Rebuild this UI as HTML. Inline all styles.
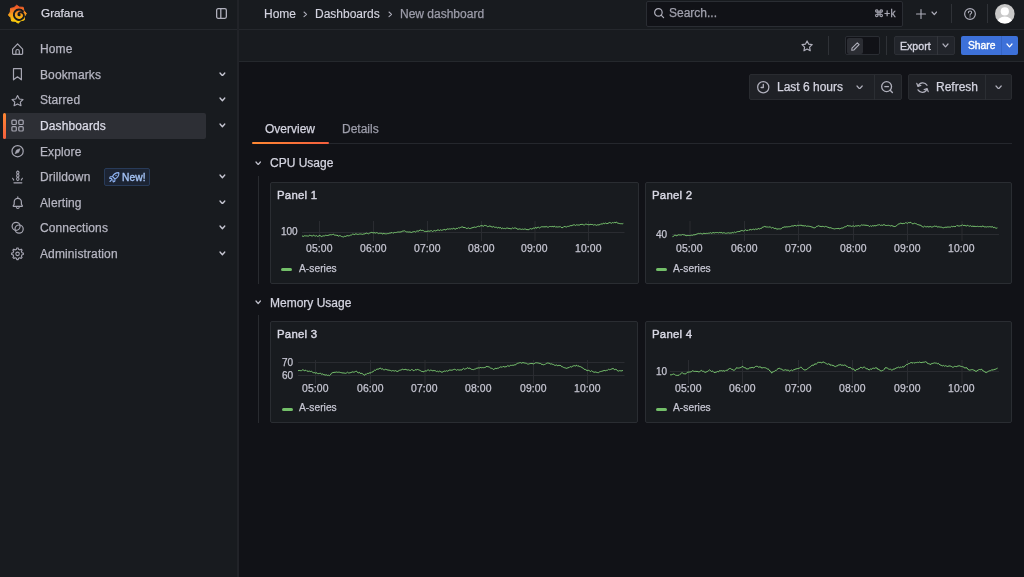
<!DOCTYPE html>
<html><head><meta charset="utf-8"><style>
html,body{margin:0;padding:0;}
body{width:1024px;height:577px;overflow:hidden;background:#111217;position:relative;font-family:"Liberation Sans",sans-serif;}
.t{position:absolute;white-space:nowrap;line-height:1;will-change:transform;-webkit-text-stroke:0.25px currentColor;}
</style></head><body>
<div style="position:absolute;left:0;top:0;width:1024px;height:29px;background:#181b1f"></div><div style="position:absolute;left:0;top:29px;width:1024px;height:1px;background:#25282d"></div><div style="position:absolute;left:0;top:30px;width:237px;height:547px;background:#181b1f"></div><div style="position:absolute;left:237px;top:0;width:2px;height:577px;background:#212328"></div><div style="position:absolute;left:239px;top:30px;width:785px;height:31px;background:#181b1f"></div><div style="position:absolute;left:239px;top:61px;width:785px;height:1px;background:#25282d"></div><svg style="position:absolute;left:7.6px;top:3.6px;overflow:visible" width="19" height="20" viewBox="0 0 19 20"><defs><linearGradient id="lg" x1="0" y1="1" x2="0" y2="0"><stop offset="0.1" stop-color="#FBCA0A"/><stop offset="0.45" stop-color="#F7A21B"/><stop offset="0.9" stop-color="#F05A28"/></linearGradient></defs>
<polygon fill="url(#lg)" stroke="url(#lg)" stroke-width="1" stroke-linejoin="round" points="8.62,1.23 11.63,3.14 15.19,3.31 15.96,6.78 18.37,9.42 16.46,12.43 16.29,15.99 12.82,16.76 10.18,19.17 7.17,17.26 3.61,17.09 2.84,13.62 0.43,10.98 2.34,7.97 2.51,4.41 5.98,3.64"/>
<path d="M14.9 7.2 A5.2 5.2 0 1 0 15.9 12.6 C16.2 10.2 14.8 8.2 12.6 8.3 C10.9 8.4 10.1 9.8 10.5 11" fill="none" stroke="#181b1f" stroke-width="1.95" stroke-linecap="round"/><circle cx="11.4" cy="11" r="1.2" fill="#181b1f"/></svg><div class="t" style="left:40.5px;top:7.2px;font-size:11.75px;color:#d8d8e4;font-weight:400;-webkit-text-stroke:0.25px #d8d8e4;">Grafana</div><svg style="position:absolute;left:216px;top:8px;overflow:visible" width="11" height="11" viewBox="0 0 11 11"><rect x="0.65" y="0.65" width="9.7" height="9.7" rx="1.5" fill="none" stroke="#b0b0bc" stroke-width="1.3"/><line x1="4.8" y1="0.8" x2="4.8" y2="10.2" stroke="#b0b0bc" stroke-width="1.3"/></svg><div style="position:absolute;left:3px;top:113px;width:203px;height:25.5px;background:#2d2f35;border-radius:2px"></div><div style="position:absolute;left:3px;top:113px;width:3px;height:25.5px;border-radius:1.5px;background:linear-gradient(180deg,#FF8833,#F55F3E)"></div><svg style="position:absolute;left:0;top:0" width="237" height="300"><path d="M12.6 49.2 L17.6 43.8 L22.6 49.2 V53.6 a0.8 0.8 0 0 1 -0.8 0.8 H13.4 a0.8 0.8 0 0 1 -0.8 -0.8 Z" fill="none" stroke="#a6a6b2" stroke-width="1.2" stroke-linejoin="round"/><path d="M15.9 54.3 V51.2 a1.7 1.7 0 0 1 3.4 0 V54.3" fill="none" stroke="#a6a6b2" stroke-width="1.2"/><path d="M13.5 68.7 H21.4 V79.8 L17.45 76.8 L13.5 79.8 Z" fill="none" stroke="#a6a6b2" stroke-width="1.2" stroke-linejoin="round"/><path d="M17.55 95.5 L19.3 99 L23 99.5 L20.3 102.1 L21 105.7 L17.55 103.9 L14.1 105.7 L14.8 102.1 L12.1 99.5 L15.8 99 Z" fill="none" stroke="#a6a6b2" stroke-width="1.15" stroke-linejoin="round"/><rect x="11.9" y="120.1" width="4.4" height="4.4" rx="1" fill="none" stroke="#a6a6b2" stroke-width="1.2"/><rect x="18.8" y="120.1" width="4.4" height="4.4" rx="1" fill="none" stroke="#a6a6b2" stroke-width="1.2"/><rect x="11.9" y="126.6" width="4.4" height="4.4" rx="1" fill="none" stroke="#a6a6b2" stroke-width="1.2"/><rect x="18.8" y="126.6" width="4.4" height="4.4" rx="1" fill="none" stroke="#a6a6b2" stroke-width="1.2"/><circle cx="17.6" cy="151.2" r="5.6" fill="none" stroke="#a6a6b2" stroke-width="1.2"/><path d="M20.1 148.7 L18.7 152.3 L15.1 153.7 L16.5 150.1 Z" fill="#a6a6b2" stroke="#a6a6b2" stroke-width="0.6" stroke-linejoin="round"/><path d="M17.8 170.9 C19.4 171.6 19.4 173.4 17.8 174.1 C16.2 173.4 16.2 171.6 17.8 170.9 Z M17.8 174.1 C19.4 174.8 19.4 176.6 17.8 177.3 C16.2 176.6 16.2 174.8 17.8 174.1 Z M17.8 177.3 C19.4 178 19.4 179.8 17.8 180.6 C16.2 179.8 16.2 178 17.8 177.3 Z" fill="none" stroke="#a6a6b2" stroke-width="1.05"/><path d="M12.6 178.2 L13.8 180.1 M22.4 178.2 L21.2 180.1" stroke="#a6a6b2" stroke-width="1.05" stroke-linecap="round"/><path d="M14 182.8 H21.8" stroke="#a6a6b2" stroke-width="1.3" stroke-linecap="round"/><path d="M14.2 204.2 V202 A3.6 3.6 0 0 1 21.4 202 V204.2 L22.3 205.6 V206.3 H13.3 V205.6 Z" fill="none" stroke="#a6a6b2" stroke-width="1.2" stroke-linejoin="round"/><path d="M16.4 207.7 Q17.8 209.2 19.2 207.7" fill="none" stroke="#a6a6b2" stroke-width="1.1" stroke-linecap="round"/><path d="M17.8 196.8 V198.3" stroke="#a6a6b2" stroke-width="1.1" stroke-linecap="round"/><circle cx="16.1" cy="226.3" r="4.0" fill="none" stroke="#a6a6b2" stroke-width="1.2"/><circle cx="19.1" cy="229.1" r="4.1" fill="none" stroke="#a6a6b2" stroke-width="1.2"/><polygon points="16.51,249.31 16.80,247.94 18.20,247.94 18.49,249.31 19.98,249.93 21.15,249.16 22.14,250.15 21.37,251.32 21.99,252.81 23.36,253.10 23.36,254.50 21.99,254.79 21.37,256.28 22.14,257.45 21.15,258.44 19.98,257.67 18.49,258.29 18.20,259.66 16.80,259.66 16.51,258.29 15.02,257.67 13.85,258.44 12.86,257.45 13.63,256.28 13.01,254.79 11.64,254.50 11.64,253.10 13.01,252.81 13.63,251.32 12.86,250.15 13.85,249.16 15.02,249.93" fill="none" stroke="#a6a6b2" stroke-width="1.1" stroke-linejoin="round"/><circle cx="17.55" cy="253.85" r="1.75" fill="none" stroke="#a6a6b2" stroke-width="1.1"/></svg><div class="t" style="left:40.3px;top:43.2px;font-size:12px;color:#b6b6c2;font-weight:400;letter-spacing:0.12px;">Home</div><div class="t" style="left:40.3px;top:68.8px;font-size:12px;color:#b6b6c2;font-weight:400;letter-spacing:0.12px;">Bookmarks</div><svg style="position:absolute;left:218.8px;top:71.69999999999999px" width="6.8" height="4.8" viewBox="-1 -1 6.8 4.8"><path d="M0 0 L2.4 2.8 L4.8 0" fill="none" stroke="#c8c8d4" stroke-width="1.3" stroke-linecap="round" stroke-linejoin="round"/></svg><div class="t" style="left:40.3px;top:94.4px;font-size:12px;color:#b6b6c2;font-weight:400;letter-spacing:0.12px;">Starred</div><svg style="position:absolute;left:218.8px;top:97.3px" width="6.8" height="4.8" viewBox="-1 -1 6.8 4.8"><path d="M0 0 L2.4 2.8 L4.8 0" fill="none" stroke="#c8c8d4" stroke-width="1.3" stroke-linecap="round" stroke-linejoin="round"/></svg><div class="t" style="left:40.3px;top:120.00000000000001px;font-size:12px;color:#dcdce8;font-weight:400;letter-spacing:0.12px;">Dashboards</div><svg style="position:absolute;left:218.8px;top:122.9px" width="6.8" height="4.8" viewBox="-1 -1 6.8 4.8"><path d="M0 0 L2.4 2.8 L4.8 0" fill="none" stroke="#c8c8d4" stroke-width="1.3" stroke-linecap="round" stroke-linejoin="round"/></svg><div class="t" style="left:40.3px;top:145.6px;font-size:12px;color:#b6b6c2;font-weight:400;letter-spacing:0.12px;">Explore</div><div class="t" style="left:40.3px;top:171.2px;font-size:12px;color:#b6b6c2;font-weight:400;letter-spacing:0.12px;">Drilldown</div><svg style="position:absolute;left:218.8px;top:174.1px" width="6.8" height="4.8" viewBox="-1 -1 6.8 4.8"><path d="M0 0 L2.4 2.8 L4.8 0" fill="none" stroke="#c8c8d4" stroke-width="1.3" stroke-linecap="round" stroke-linejoin="round"/></svg><div class="t" style="left:40.3px;top:196.8px;font-size:12px;color:#b6b6c2;font-weight:400;letter-spacing:0.12px;">Alerting</div><svg style="position:absolute;left:218.8px;top:199.70000000000002px" width="6.8" height="4.8" viewBox="-1 -1 6.8 4.8"><path d="M0 0 L2.4 2.8 L4.8 0" fill="none" stroke="#c8c8d4" stroke-width="1.3" stroke-linecap="round" stroke-linejoin="round"/></svg><div class="t" style="left:40.3px;top:222.4px;font-size:12px;color:#b6b6c2;font-weight:400;letter-spacing:0.12px;">Connections</div><svg style="position:absolute;left:218.8px;top:225.3px" width="6.8" height="4.8" viewBox="-1 -1 6.8 4.8"><path d="M0 0 L2.4 2.8 L4.8 0" fill="none" stroke="#c8c8d4" stroke-width="1.3" stroke-linecap="round" stroke-linejoin="round"/></svg><div class="t" style="left:40.3px;top:248.0px;font-size:12px;color:#b6b6c2;font-weight:400;letter-spacing:0.12px;">Administration</div><svg style="position:absolute;left:218.8px;top:250.9px" width="6.8" height="4.8" viewBox="-1 -1 6.8 4.8"><path d="M0 0 L2.4 2.8 L4.8 0" fill="none" stroke="#c8c8d4" stroke-width="1.3" stroke-linecap="round" stroke-linejoin="round"/></svg><div style="position:absolute;left:104px;top:168px;width:45.5px;height:17.5px;box-sizing:border-box;border:1px solid #283b59;background:#1c2433;border-radius:2px"></div><svg style="position:absolute;left:108.5px;top:171.5px;overflow:visible" width="10.5" height="10.5" viewBox="0 0 10.5 10.5"><path d="M9.6 0.6 C7 0.6 4.8 2 3.5 4.5 L6 7 C8.5 5.7 9.9 3.5 9.9 0.9 Z M3.5 4.5 L1.3 4.7 L0.6 6.3 L2.7 6.6 M6 7 L5.8 9.2 L4.2 9.9 L3.9 7.8 M2.8 7.7 L1 9.5" fill="none" stroke="#8fb3f2" stroke-width="1.1" stroke-linejoin="round" stroke-linecap="round"/><circle cx="7" cy="3.5" r="0.7" fill="#8fb3f2"/></svg><div class="t" style="left:122.3px;top:173.3px;font-size:10.2px;color:#a4c2f4;font-weight:400;-webkit-text-stroke:0.35px #a4c2f4;letter-spacing:0.1px;">New!</div><div class="t" style="left:264px;top:7.5px;font-size:12px;color:#d4d4e0;font-weight:400;-webkit-text-stroke:0.15px #d4d4e0;">Home</div><svg style="position:absolute;left:303.2px;top:11px" width="4.6" height="6.6" viewBox="-1 -1 4.6 6.6"><path d="M0 0 L2.6 2.3 L0 4.6" fill="none" stroke="#b0b0bc" stroke-width="1.05" stroke-linecap="round" stroke-linejoin="round"/></svg><div class="t" style="left:315px;top:7.5px;font-size:12px;color:#d4d4e0;font-weight:400;-webkit-text-stroke:0.15px #d4d4e0;">Dashboards</div><svg style="position:absolute;left:387.6px;top:11px" width="4.6" height="6.6" viewBox="-1 -1 4.6 6.6"><path d="M0 0 L2.6 2.3 L0 4.6" fill="none" stroke="#b0b0bc" stroke-width="1.05" stroke-linecap="round" stroke-linejoin="round"/></svg><div class="t" style="left:400px;top:7.5px;font-size:12px;color:#9d9daa;font-weight:400;">New dashboard</div><div style="position:absolute;left:646px;top:1px;width:257px;height:26px;box-sizing:border-box;border:1px solid #2a2d33;background:#111217;border-radius:2px"></div><svg style="position:absolute;left:654px;top:8.3px;overflow:visible" width="10.5" height="10.5" viewBox="0 0 10.5 10.5"><circle cx="4.4" cy="4.4" r="3.75" fill="none" stroke="#b0b0bc" stroke-width="1.2"/><path d="M7.1 7.1 L9.6 9.6" stroke="#b0b0bc" stroke-width="1.2" stroke-linecap="round"/></svg><div class="t" style="left:669.2px;top:7.3px;font-size:12px;color:#a0a0ac;font-weight:400;">Search...</div><div class="t" style="left:874.4px;top:8.8px;font-size:10px;color:#a8a8b4;font-weight:400;letter-spacing:0.3px;-webkit-text-stroke:0.3px #a8a8b4;">&#8984;+k</div><svg style="position:absolute;left:916px;top:8.7px;overflow:visible" width="10" height="10" viewBox="0 0 10 10"><path d="M5 0.5 V9.5 M0.5 5 H9.5" stroke="#b0b0bc" stroke-width="1.1" stroke-linecap="round"/></svg><svg style="position:absolute;left:930.8px;top:11.2px" width="6.6" height="4.6" viewBox="-1 -1 6.6 4.6"><path d="M0 0 L2.3 2.6 L4.6 0" fill="none" stroke="#b0b0bc" stroke-width="1.15" stroke-linecap="round" stroke-linejoin="round"/></svg><div style="position:absolute;left:951px;top:4px;width:1px;height:19px;background:#2f3237"></div><svg style="position:absolute;left:963.6px;top:7.6px;overflow:visible" width="12" height="12" viewBox="0 0 12 12"><circle cx="6" cy="6" r="5.35" fill="none" stroke="#b0b0bc" stroke-width="1.15"/><path d="M4.4 4.7 C4.4 3.6 5.1 3 6 3 C6.9 3 7.7 3.6 7.7 4.5 C7.7 5.5 6.05 5.7 6.05 6.9 V7.3" fill="none" stroke="#b0b0bc" stroke-width="1.05" stroke-linecap="round"/><circle cx="6.05" cy="8.9" r="0.65" fill="#b0b0bc"/></svg><div style="position:absolute;left:987px;top:4px;width:1px;height:19px;background:#2f3237"></div><svg style="position:absolute;left:995px;top:3.8px;overflow:visible" width="19.6" height="19.6" viewBox="0 0 19.6 19.6"><defs><clipPath id="av"><circle cx="9.8" cy="9.8" r="9.8"/></clipPath></defs><circle cx="9.8" cy="9.8" r="9.8" fill="#c8c8c8"/><g clip-path="url(#av)" fill="#ffffff"><circle cx="9.8" cy="7.4" r="4.1"/><ellipse cx="9.8" cy="19.2" rx="7.8" ry="6.8"/></g></svg><svg style="position:absolute;left:801px;top:39.8px;overflow:visible" width="12.2" height="11.8" viewBox="0 0 12.2 11.8"><path d="M6.1 0.9 L7.65 4.1 L11.2 4.6 L8.6 7.05 L9.25 10.8 L6.1 9.05 L2.95 10.8 L3.6 7.05 L1 4.6 L4.55 4.1 Z" fill="none" stroke="#b0b0bc" stroke-width="1.15" stroke-linejoin="round"/></svg><div style="position:absolute;left:828px;top:36px;width:1px;height:19px;background:#2f3237"></div><div style="position:absolute;left:845px;top:36px;width:35px;height:19px;box-sizing:border-box;border:1px solid #2a2d33;background:#111217;border-radius:2px"></div><div style="position:absolute;left:847px;top:38px;width:16px;height:15.5px;background:#2b2d33;border-radius:2px"></div><svg style="position:absolute;left:850.5px;top:41.5px;overflow:visible" width="9" height="9" viewBox="0 0 9 9"><path d="M6.3 0.9 L8.1 2.7 L2.8 8 L0.8 8.3 L1 6.2 Z" fill="none" stroke="#b0b0bc" stroke-width="1.1" stroke-linejoin="round"/></svg><div style="position:absolute;left:886px;top:36px;width:1px;height:19px;background:#2f3237"></div><div style="position:absolute;left:893.5px;top:36px;width:61px;height:19px;box-sizing:border-box;border:1px solid #2c2f35;background:#22252b;border-radius:2px"></div><div style="position:absolute;left:937px;top:36px;width:1px;height:19px;background:#33363c"></div><div class="t" style="left:899.8px;top:40.5px;font-size:10.6px;color:#d6d6e2;font-weight:400;-webkit-text-stroke:0.35px #d6d6e2;">Export</div><svg style="position:absolute;left:942.3px;top:43.4px" width="7" height="4.8" viewBox="-1 -1 7 4.8"><path d="M0 0 L2.5 2.8 L5 0" fill="none" stroke="#b0b0bc" stroke-width="1.2" stroke-linecap="round" stroke-linejoin="round"/></svg><div style="position:absolute;left:961px;top:36px;width:57px;height:19px;background:#3d71d9;border-radius:2px"></div><div style="position:absolute;left:1001px;top:36px;width:1px;height:19px;background:#3565c4"></div><div class="t" style="left:967.8px;top:41.2px;font-size:10.3px;color:#ffffff;font-weight:400;-webkit-text-stroke:0.4px #ffffff;">Share</div><svg style="position:absolute;left:1006.3px;top:43.4px" width="7" height="4.8" viewBox="-1 -1 7 4.8"><path d="M0 0 L2.5 2.8 L5 0" fill="none" stroke="#ffffff" stroke-width="1.2" stroke-linecap="round" stroke-linejoin="round"/></svg><div style="position:absolute;left:749px;top:74px;width:153px;height:26px;box-sizing:border-box;border:1px solid #292b30;background:#1f2126;border-radius:2px"></div><div style="position:absolute;left:873.5px;top:74.5px;width:1px;height:25.5px;background:#2b2e33"></div><svg style="position:absolute;left:757px;top:80.9px;overflow:visible" width="12.5" height="12.5" viewBox="0 0 12.5 12.5"><circle cx="6.25" cy="6.25" r="5.6" fill="none" stroke="#b0b0bc" stroke-width="1.25"/><path d="M6.3 3.3 V6.5 H4.1" fill="none" stroke="#b0b0bc" stroke-width="1.3" stroke-linecap="round" stroke-linejoin="round"/></svg><div class="t" style="left:777px;top:80.5px;font-size:12px;color:#d4d4e0;font-weight:400;-webkit-text-stroke:0.25px #d4d4e0;">Last 6 hours</div><svg style="position:absolute;left:855.5px;top:84.6px" width="7.2" height="4.9" viewBox="-1 -1 7.2 4.9"><path d="M0 0 L2.6 2.9 L5.2 0" fill="none" stroke="#b0b0bc" stroke-width="1.2" stroke-linecap="round" stroke-linejoin="round"/></svg><svg style="position:absolute;left:881px;top:80.6px;overflow:visible" width="13" height="13" viewBox="0 0 13 13"><circle cx="5.6" cy="5.6" r="4.95" fill="none" stroke="#b0b0bc" stroke-width="1.3"/><path d="M3.3 5.6 H7.9" stroke="#b0b0bc" stroke-width="1.3"/><path d="M9.2 9.2 L11.4 11.5" stroke="#b0b0bc" stroke-width="1.35" stroke-linecap="round"/></svg><div style="position:absolute;left:908px;top:74px;width:104px;height:26px;box-sizing:border-box;border:1px solid #292b30;background:#1f2126;border-radius:2px"></div><div style="position:absolute;left:985px;top:74.5px;width:1px;height:25.5px;background:#2b2e33"></div><svg style="position:absolute;left:915.5px;top:80.5px;overflow:visible" width="13" height="13" viewBox="0 0 13 13"><path d="M2.2 5 A4.9 4.9 0 0 1 11 4.3 M10.8 8.2 A4.9 4.9 0 0 1 2 8.9" fill="none" stroke="#b0b0bc" stroke-width="1.25" stroke-linecap="round"/><path d="M0.8 2.4 L1.9 5.3 L4.8 4.4 M12.2 10.6 L11.1 7.7 L8.2 8.6" fill="none" stroke="#b0b0bc" stroke-width="1.25" stroke-linecap="round" stroke-linejoin="round"/></svg><div class="t" style="left:936px;top:80.5px;font-size:12px;color:#d4d4e0;font-weight:400;-webkit-text-stroke:0.25px #d4d4e0;">Refresh</div><svg style="position:absolute;left:994.5px;top:84.6px" width="7.2" height="4.9" viewBox="-1 -1 7.2 4.9"><path d="M0 0 L2.6 2.9 L5.2 0" fill="none" stroke="#b0b0bc" stroke-width="1.2" stroke-linecap="round" stroke-linejoin="round"/></svg><div class="t" style="left:265px;top:122.5px;font-size:12px;color:#d4d4e0;font-weight:400;">Overview</div><div class="t" style="left:341.5px;top:122.5px;font-size:12px;color:#9d9daa;font-weight:400;">Details</div><div style="position:absolute;left:252px;top:143px;width:760px;height:1px;background:#25272d"></div><div style="position:absolute;left:252px;top:142px;width:77px;height:2px;border-radius:1px;background:linear-gradient(90deg,#FF8833,#F55F3E)"></div><svg style="position:absolute;left:254.6px;top:160.8px" width="6.4" height="4.6" viewBox="-1 -1 6.4 4.6"><path d="M0 0 L2.2 2.6 L4.4 0" fill="none" stroke="#c0c0cc" stroke-width="1.25" stroke-linecap="round" stroke-linejoin="round"/></svg><div class="t" style="left:270.3px;top:157.2px;font-size:12px;color:#d4d4e0;font-weight:400;">CPU Usage</div><div style="position:absolute;left:257.5px;top:175.5px;width:1px;height:108.5px;background:#292b30"></div><svg style="position:absolute;left:254.6px;top:300.3px" width="6.4" height="4.6" viewBox="-1 -1 6.4 4.6"><path d="M0 0 L2.2 2.6 L4.4 0" fill="none" stroke="#c0c0cc" stroke-width="1.25" stroke-linecap="round" stroke-linejoin="round"/></svg><div class="t" style="left:270.3px;top:296.7px;font-size:12px;color:#d4d4e0;font-weight:400;">Memory Usage</div><div style="position:absolute;left:257.5px;top:314.5px;width:1px;height:108.5px;background:#292b30"></div><div style="position:absolute;left:270px;top:182px;width:369px;height:102px;box-sizing:border-box;border:1px solid #2a2d32;background:#181b1f;border-radius:2px"></div><div class="t" style="left:277px;top:189.5px;font-size:11.4px;color:#d8d8e4;font-weight:400;letter-spacing:0.25px;-webkit-text-stroke:0.42px #d8d8e4;">Panel 1</div><div style="position:absolute;left:645px;top:182px;width:367px;height:102px;box-sizing:border-box;border:1px solid #2a2d32;background:#181b1f;border-radius:2px"></div><div class="t" style="left:652px;top:189.5px;font-size:11.4px;color:#d8d8e4;font-weight:400;letter-spacing:0.25px;-webkit-text-stroke:0.42px #d8d8e4;">Panel 2</div><div style="position:absolute;left:270px;top:321px;width:368px;height:102px;box-sizing:border-box;border:1px solid #2a2d32;background:#181b1f;border-radius:2px"></div><div class="t" style="left:277px;top:328.5px;font-size:11.4px;color:#d8d8e4;font-weight:400;letter-spacing:0.25px;-webkit-text-stroke:0.42px #d8d8e4;">Panel 3</div><div style="position:absolute;left:645px;top:321px;width:367px;height:102px;box-sizing:border-box;border:1px solid #2a2d32;background:#181b1f;border-radius:2px"></div><div class="t" style="left:652px;top:328.5px;font-size:11.4px;color:#d8d8e4;font-weight:400;letter-spacing:0.25px;-webkit-text-stroke:0.42px #d8d8e4;">Panel 4</div><svg style="position:absolute;left:0;top:0" width="1024" height="577"><line x1="302" y1="232.5" x2="624.5" y2="232.5" stroke="#2a2c31" stroke-width="1"/><line x1="319.5" y1="221" x2="319.5" y2="241" stroke="#2a2c31" stroke-width="1"/><line x1="373.5" y1="221" x2="373.5" y2="241" stroke="#2a2c31" stroke-width="1"/><line x1="427.5" y1="221" x2="427.5" y2="241" stroke="#2a2c31" stroke-width="1"/><line x1="481.5" y1="221" x2="481.5" y2="241" stroke="#2a2c31" stroke-width="1"/><line x1="535" y1="221" x2="535" y2="241" stroke="#2a2c31" stroke-width="1"/><line x1="588.5" y1="221" x2="588.5" y2="241" stroke="#2a2c31" stroke-width="1"/><polyline points="302.0,235.7 302.9,236.4 303.8,236.3 304.7,235.7 305.6,235.9 306.5,235.9 307.4,236.0 308.3,236.2 309.2,235.4 310.1,235.2 311.0,236.1 311.9,235.6 312.8,236.0 313.7,235.2 314.6,235.8 315.5,236.1 316.4,235.6 317.3,236.4 318.2,236.4 319.1,235.5 320.0,235.5 320.9,236.1 321.8,236.6 322.7,236.0 323.6,235.8 324.5,235.9 325.4,235.3 326.3,235.4 327.2,235.5 328.1,235.4 329.0,235.0 329.9,234.8 330.8,234.7 331.7,234.8 332.6,234.5 333.5,234.1 334.4,235.2 335.3,235.1 336.2,235.4 337.1,235.0 338.0,236.1 338.9,236.1 339.8,235.5 340.7,235.9 341.6,236.5 342.5,236.7 343.4,237.0 344.3,236.3 345.2,236.5 346.1,236.2 347.0,235.6 347.9,235.7 348.8,235.9 349.7,235.6 350.6,235.1 351.5,235.0 352.4,234.2 353.3,234.2 354.2,234.7 355.1,234.1 356.0,233.8 356.9,234.2 357.8,234.4 358.7,234.3 359.6,234.0 360.5,234.0 361.4,234.1 362.3,234.4 363.2,234.1 364.1,233.9 365.0,233.9 365.9,233.3 366.8,233.1 367.7,233.6 368.6,233.8 369.5,233.2 370.4,232.8 371.3,232.4 372.2,232.6 373.1,232.9 374.0,232.8 374.9,232.7 375.8,233.2 376.7,232.6 377.6,233.0 378.5,233.6 379.4,233.3 380.3,233.3 381.2,233.2 382.1,233.6 383.0,234.2 383.9,233.1 384.8,233.9 385.7,233.8 386.6,233.8 387.5,233.6 388.4,233.6 389.3,233.2 390.2,233.1 391.1,232.9 392.0,232.4 392.9,233.3 393.8,232.8 394.7,232.4 395.6,232.6 396.5,232.4 397.4,232.1 398.3,232.0 399.2,232.1 400.1,232.0 401.0,231.9 401.9,231.6 402.8,231.0 403.7,231.0 404.6,230.8 405.5,231.4 406.4,231.9 407.3,231.9 408.2,232.0 409.1,232.2 410.0,231.7 410.9,232.5 411.8,232.4 412.7,231.9 413.6,231.7 414.5,231.5 415.4,232.1 416.3,231.3 417.2,230.9 418.1,231.3 419.0,230.8 419.9,230.2 420.8,230.1 421.7,230.6 422.6,230.4 423.5,230.7 424.4,231.4 425.3,231.4 426.2,231.4 427.1,231.5 428.0,230.9 428.9,231.2 429.8,231.2 430.7,230.8 431.6,230.7 432.5,231.5 433.4,231.0 434.3,230.5 435.2,230.9 436.1,231.0 437.0,230.1 437.9,230.0 438.8,230.1 439.7,230.6 440.6,229.8 441.5,230.3 442.4,230.1 443.3,229.8 444.2,229.3 445.1,230.0 446.0,229.7 446.9,229.2 447.8,228.8 448.7,229.2 449.6,228.9 450.5,229.0 451.4,228.7 452.3,229.0 453.2,228.3 454.1,228.5 455.0,229.2 455.9,229.0 456.8,228.1 457.7,228.5 458.6,227.6 459.5,228.0 460.4,227.5 461.3,227.1 462.2,227.0 463.1,226.9 464.0,228.0 464.9,227.2 465.8,228.2 466.7,228.5 467.6,228.3 468.5,227.9 469.4,228.5 470.3,228.5 471.2,228.1 472.1,227.8 473.0,227.5 473.9,227.3 474.8,227.0 475.7,227.4 476.6,227.0 477.5,226.5 478.4,226.2 479.3,226.6 480.2,225.9 481.1,225.9 482.0,225.5 482.9,226.1 483.8,226.2 484.7,225.3 485.6,225.6 486.5,225.8 487.4,226.6 488.3,226.5 489.2,226.1 490.1,226.0 491.0,226.6 491.9,226.9 492.8,227.0 493.7,226.5 494.6,227.3 495.5,227.3 496.4,227.2 497.3,228.0 498.2,227.3 499.1,228.1 500.0,227.5 500.9,227.8 501.8,228.8 502.7,228.0 503.6,228.6 504.5,228.4 505.4,228.7 506.3,228.2 507.2,228.1 508.1,228.1 509.0,228.7 509.9,228.4 510.8,228.8 511.7,228.7 512.6,227.9 513.5,228.4 514.4,228.0 515.3,228.0 516.2,228.1 517.1,229.1 518.0,229.1 518.9,229.2 519.8,228.8 520.7,229.2 521.6,229.4 522.5,229.1 523.4,229.4 524.3,229.1 525.2,229.0 526.1,229.3 527.0,229.9 527.9,229.4 528.8,229.7 529.7,229.0 530.6,228.6 531.5,229.0 532.4,228.9 533.3,227.9 534.2,228.5 535.1,227.7 536.0,227.5 536.9,228.3 537.8,227.2 538.7,227.3 539.6,228.0 540.5,227.3 541.4,226.8 542.3,226.8 543.2,226.7 544.1,227.2 545.0,226.3 545.9,227.1 546.8,226.5 547.7,227.2 548.6,227.1 549.5,226.5 550.4,226.5 551.3,226.7 552.2,226.3 553.1,227.0 554.0,226.3 554.9,226.3 555.8,227.4 556.7,226.7 557.6,227.0 558.5,226.9 559.4,226.8 560.3,226.5 561.2,227.5 562.1,227.6 563.0,227.6 563.9,226.5 564.8,226.5 565.7,226.8 566.6,227.0 567.5,226.4 568.4,226.4 569.3,226.2 570.2,225.6 571.1,225.8 572.0,225.4 572.9,225.2 573.8,224.8 574.7,224.9 575.6,225.5 576.5,224.8 577.4,225.0 578.3,225.0 579.2,225.2 580.1,224.6 581.0,224.4 581.9,224.4 582.8,224.4 583.7,224.9 584.6,224.9 585.5,224.2 586.4,224.2 587.3,224.5 588.2,224.7 589.1,224.8 590.0,224.5 590.9,224.3 591.8,224.6 592.7,224.5 593.6,225.1 594.5,224.7 595.4,224.8 596.3,225.4 597.2,224.8 598.1,225.1 599.0,224.6 599.9,224.8 600.8,223.8 601.7,224.0 602.6,224.1 603.5,223.1 604.4,223.8 605.3,222.9 606.2,223.5 607.1,223.6 608.0,223.4 608.9,222.8 609.8,222.5 610.7,222.9 611.6,223.3 612.5,222.5 613.4,223.1 614.3,222.2 615.2,223.0 616.1,222.0 617.0,222.5 617.9,223.3 618.8,223.3 619.7,223.6 620.6,223.7 621.5,223.7 622.4,223.8 623.3,223.4" fill="none" stroke="#7ccb72" stroke-width="1" stroke-linejoin="round"/></svg><div class="t" style="left:281px;top:226.5px;font-size:10px;color:#c6c6d2;font-weight:400;">100</div><div class="t" style="left:305.7px;top:244.1px;font-size:10.4px;color:#c6c6d2;font-weight:400;letter-spacing:0.12px;">05:00</div><div class="t" style="left:359.7px;top:244.1px;font-size:10.4px;color:#c6c6d2;font-weight:400;letter-spacing:0.12px;">06:00</div><div class="t" style="left:413.7px;top:244.1px;font-size:10.4px;color:#c6c6d2;font-weight:400;letter-spacing:0.12px;">07:00</div><div class="t" style="left:467.7px;top:244.1px;font-size:10.4px;color:#c6c6d2;font-weight:400;letter-spacing:0.12px;">08:00</div><div class="t" style="left:521.2px;top:244.1px;font-size:10.4px;color:#c6c6d2;font-weight:400;letter-spacing:0.12px;">09:00</div><div class="t" style="left:574.7px;top:244.1px;font-size:10.4px;color:#c6c6d2;font-weight:400;letter-spacing:0.12px;">10:00</div><div style="position:absolute;left:281px;top:268px;width:11px;height:3px;border-radius:1.5px;background:#73BF69"></div><div class="t" style="left:298.5px;top:263.5px;font-size:10.2px;color:#c6c6d2;font-weight:400;letter-spacing:0.05px;">A-series</div><svg style="position:absolute;left:0;top:0" width="1024" height="577"><line x1="672" y1="234.5" x2="999" y2="234.5" stroke="#2a2c31" stroke-width="1"/><line x1="690" y1="221" x2="690" y2="241" stroke="#2a2c31" stroke-width="1"/><line x1="744.5" y1="221" x2="744.5" y2="241" stroke="#2a2c31" stroke-width="1"/><line x1="798.5" y1="221" x2="798.5" y2="241" stroke="#2a2c31" stroke-width="1"/><line x1="853.5" y1="221" x2="853.5" y2="241" stroke="#2a2c31" stroke-width="1"/><line x1="907.5" y1="221" x2="907.5" y2="241" stroke="#2a2c31" stroke-width="1"/><line x1="962" y1="221" x2="962" y2="241" stroke="#2a2c31" stroke-width="1"/><polyline points="672.5,236.7 673.4,236.5 674.3,235.3 675.2,235.1 676.1,235.8 677.0,235.5 677.9,235.2 678.8,234.7 679.7,235.0 680.6,235.0 681.5,235.0 682.4,234.5 683.3,234.8 684.2,234.8 685.1,235.2 686.0,235.6 686.9,235.7 687.8,235.4 688.7,235.5 689.6,235.5 690.5,235.4 691.4,235.2 692.3,235.4 693.2,234.9 694.1,234.7 695.0,235.0 695.9,234.3 696.8,234.1 697.7,233.7 698.6,233.4 699.5,233.6 700.4,233.3 701.3,233.6 702.2,234.1 703.1,233.6 704.0,233.0 704.9,233.7 705.8,233.5 706.7,233.3 707.6,233.4 708.5,233.2 709.4,233.2 710.3,232.6 711.2,233.3 712.1,233.2 713.0,232.3 713.9,232.9 714.8,232.9 715.7,232.5 716.6,232.6 717.5,232.5 718.4,232.9 719.3,232.4 720.2,232.8 721.1,232.3 722.0,233.0 722.9,233.1 723.8,232.7 724.7,232.9 725.6,233.3 726.5,233.2 727.4,233.0 728.3,232.8 729.2,233.0 730.1,233.3 731.0,232.6 731.9,233.2 732.8,232.3 733.7,232.9 734.6,232.0 735.5,232.6 736.4,232.1 737.3,231.7 738.2,231.6 739.1,231.6 740.0,231.3 740.9,230.8 741.8,230.5 742.7,230.7 743.6,231.0 744.5,230.5 745.4,229.8 746.3,230.5 747.2,230.3 748.1,230.5 749.0,229.6 749.9,230.1 750.8,229.3 751.7,229.9 752.6,229.4 753.5,229.2 754.4,229.8 755.3,228.9 756.2,229.2 757.1,229.4 758.0,228.7 758.9,228.5 759.8,229.1 760.7,228.4 761.6,228.3 762.5,227.1 763.4,227.0 764.3,226.4 765.2,226.9 766.1,226.4 767.0,227.5 767.9,226.6 768.8,227.5 769.7,226.8 770.6,227.2 771.5,228.0 772.4,227.5 773.3,227.8 774.2,228.5 775.1,228.4 776.0,228.2 776.9,229.5 777.8,228.8 778.7,228.9 779.6,228.9 780.5,228.9 781.4,228.7 782.3,227.6 783.2,227.5 784.1,226.9 785.0,227.0 785.9,227.0 786.8,226.8 787.7,226.9 788.6,226.7 789.5,226.7 790.4,226.5 791.3,226.1 792.2,225.8 793.1,226.2 794.0,225.7 794.9,225.4 795.8,225.7 796.7,226.1 797.6,225.2 798.5,225.6 799.4,225.3 800.3,225.4 801.2,224.9 802.1,226.0 803.0,225.4 803.9,226.0 804.8,225.9 805.7,225.7 806.6,226.4 807.5,226.1 808.4,226.2 809.3,226.3 810.2,226.5 811.1,226.6 812.0,227.3 812.9,227.2 813.8,227.9 814.7,227.8 815.6,227.5 816.5,226.4 817.4,226.3 818.3,225.7 819.2,226.1 820.1,226.3 821.0,226.6 821.9,226.6 822.8,226.3 823.7,226.6 824.6,226.9 825.5,226.4 826.4,226.6 827.3,227.1 828.2,227.0 829.1,228.0 830.0,227.7 830.9,227.8 831.8,228.2 832.7,228.5 833.6,228.7 834.5,228.9 835.4,228.7 836.3,228.5 837.2,228.7 838.1,228.2 839.0,228.8 839.9,228.8 840.8,228.4 841.7,228.0 842.6,228.0 843.5,227.8 844.4,226.8 845.3,226.8 846.2,226.5 847.1,225.7 848.0,225.4 848.9,226.2 849.8,225.8 850.7,226.0 851.6,226.4 852.5,226.1 853.4,225.8 854.3,226.6 855.2,226.0 856.1,225.7 857.0,226.3 857.9,225.5 858.8,225.6 859.7,226.1 860.6,225.7 861.5,224.9 862.4,225.2 863.3,225.0 864.2,225.2 865.1,225.0 866.0,225.6 866.9,225.2 867.8,225.6 868.7,225.8 869.6,226.6 870.5,225.7 871.4,226.4 872.3,225.6 873.2,226.0 874.1,225.7 875.0,225.6 875.9,225.9 876.8,225.4 877.7,225.0 878.6,224.9 879.5,224.7 880.4,225.4 881.3,225.1 882.2,225.4 883.1,225.1 884.0,224.4 884.9,225.2 885.8,225.5 886.7,225.5 887.6,225.4 888.5,225.3 889.4,225.5 890.3,226.0 891.2,225.5 892.1,225.9 893.0,225.9 893.9,226.6 894.8,226.5 895.7,226.3 896.6,225.7 897.5,224.7 898.4,224.1 899.3,223.9 900.2,223.2 901.1,223.3 902.0,223.5 902.9,223.7 903.8,223.3 904.7,223.5 905.6,222.7 906.5,222.9 907.4,223.5 908.3,222.6 909.2,222.8 910.1,222.4 911.0,222.4 911.9,223.5 912.8,223.8 913.7,223.6 914.6,223.2 915.5,223.6 916.4,223.8 917.3,224.5 918.2,224.7 919.1,224.9 920.0,225.3 920.9,225.3 921.8,226.1 922.7,227.0 923.6,227.0 924.5,226.2 925.4,226.7 926.3,226.9 927.2,226.4 928.1,227.1 929.0,226.6 929.9,226.8 930.8,226.5 931.7,227.1 932.6,226.9 933.5,226.6 934.4,226.1 935.3,226.4 936.2,226.1 937.1,226.8 938.0,227.2 938.9,226.6 939.8,227.1 940.7,227.1 941.6,227.2 942.5,227.6 943.4,227.8 944.3,227.5 945.2,227.1 946.1,227.6 947.0,226.8 947.9,227.2 948.8,227.0 949.7,227.1 950.6,227.1 951.5,226.3 952.4,226.7 953.3,226.4 954.2,226.5 955.1,226.7 956.0,226.3 956.9,225.4 957.8,225.8 958.7,226.0 959.6,226.0 960.5,225.7 961.4,225.7 962.3,224.7 963.2,225.6 964.1,225.4 965.0,225.4 965.9,225.9 966.8,225.9 967.7,225.2 968.6,226.1 969.5,226.2 970.4,225.7 971.3,226.4 972.2,226.3 973.1,226.0 974.0,226.8 974.9,226.1 975.8,226.6 976.7,226.5 977.6,226.3 978.5,226.6 979.4,226.5 980.3,226.3 981.2,227.1 982.1,226.1 983.0,226.1 983.9,226.6 984.8,227.0 985.7,226.8 986.6,227.0 987.5,226.7 988.4,226.9 989.3,226.7 990.2,226.7 991.1,227.1 992.0,226.7 992.9,226.9 993.8,227.8 994.7,227.3 995.6,228.0 996.5,228.2 997.4,227.9" fill="none" stroke="#7ccb72" stroke-width="1" stroke-linejoin="round"/></svg><div class="t" style="left:655.5px;top:229.5px;font-size:10px;color:#c6c6d2;font-weight:400;">40</div><div class="t" style="left:676.2px;top:244.1px;font-size:10.4px;color:#c6c6d2;font-weight:400;letter-spacing:0.12px;">05:00</div><div class="t" style="left:730.7px;top:244.1px;font-size:10.4px;color:#c6c6d2;font-weight:400;letter-spacing:0.12px;">06:00</div><div class="t" style="left:784.7px;top:244.1px;font-size:10.4px;color:#c6c6d2;font-weight:400;letter-spacing:0.12px;">07:00</div><div class="t" style="left:839.7px;top:244.1px;font-size:10.4px;color:#c6c6d2;font-weight:400;letter-spacing:0.12px;">08:00</div><div class="t" style="left:893.7px;top:244.1px;font-size:10.4px;color:#c6c6d2;font-weight:400;letter-spacing:0.12px;">09:00</div><div class="t" style="left:948.2px;top:244.1px;font-size:10.4px;color:#c6c6d2;font-weight:400;letter-spacing:0.12px;">10:00</div><div style="position:absolute;left:655.5px;top:268px;width:11px;height:3px;border-radius:1.5px;background:#73BF69"></div><div class="t" style="left:673.0px;top:263.5px;font-size:10.2px;color:#c6c6d2;font-weight:400;letter-spacing:0.05px;">A-series</div><svg style="position:absolute;left:0;top:0" width="1024" height="577"><line x1="298" y1="362.5" x2="624.5" y2="362.5" stroke="#2a2c31" stroke-width="1"/><line x1="298" y1="375.5" x2="624.5" y2="375.5" stroke="#2a2c31" stroke-width="1"/><line x1="315.5" y1="360" x2="315.5" y2="384" stroke="#2a2c31" stroke-width="1"/><line x1="370.5" y1="360" x2="370.5" y2="384" stroke="#2a2c31" stroke-width="1"/><line x1="425" y1="360" x2="425" y2="384" stroke="#2a2c31" stroke-width="1"/><line x1="479" y1="360" x2="479" y2="384" stroke="#2a2c31" stroke-width="1"/><line x1="533.5" y1="360" x2="533.5" y2="384" stroke="#2a2c31" stroke-width="1"/><line x1="587.5" y1="360" x2="587.5" y2="384" stroke="#2a2c31" stroke-width="1"/><polyline points="298.0,370.4 298.9,370.7 299.8,370.4 300.7,370.7 301.6,370.6 302.5,369.9 303.4,369.8 304.3,370.9 305.2,370.3 306.1,370.4 307.0,371.4 307.9,370.9 308.8,371.5 309.7,371.1 310.6,371.6 311.5,371.3 312.4,372.1 313.3,372.7 314.2,372.5 315.1,373.0 316.0,373.2 316.9,372.7 317.8,373.7 318.7,373.6 319.6,373.4 320.5,373.2 321.4,374.3 322.3,373.9 323.2,374.4 324.1,374.8 325.0,374.8 325.9,375.2 326.8,374.8 327.7,375.5 328.6,375.2 329.5,375.6 330.4,374.9 331.3,373.4 332.2,372.9 333.1,372.4 334.0,372.7 334.9,372.1 335.8,372.3 336.7,372.0 337.6,372.3 338.5,372.2 339.4,372.2 340.3,372.5 341.2,372.6 342.1,373.0 343.0,372.8 343.9,373.1 344.8,373.1 345.7,373.3 346.6,372.9 347.5,372.2 348.4,372.9 349.3,372.9 350.2,372.8 351.1,372.3 352.0,372.3 352.9,371.6 353.8,372.3 354.7,371.9 355.6,371.4 356.5,371.1 357.4,372.4 358.3,372.9 359.2,372.2 360.1,373.4 361.0,373.3 361.9,373.4 362.8,373.9 363.7,374.8 364.6,375.3 365.5,374.0 366.4,374.3 367.3,373.3 368.2,373.7 369.1,372.8 370.0,373.1 370.9,372.8 371.8,371.9 372.7,372.1 373.6,370.9 374.5,370.2 375.4,370.5 376.3,369.4 377.2,369.2 378.1,369.1 379.0,369.0 379.9,368.2 380.8,368.2 381.7,369.4 382.6,368.8 383.5,369.7 384.4,369.8 385.3,369.3 386.2,369.5 387.1,369.8 388.0,370.1 388.9,370.1 389.8,370.3 390.7,370.5 391.6,371.0 392.5,370.6 393.4,370.7 394.3,371.1 395.2,370.6 396.1,370.8 397.0,371.7 397.9,371.2 398.8,370.9 399.7,370.0 400.6,370.1 401.5,370.0 402.4,369.0 403.3,369.6 404.2,369.7 405.1,369.1 406.0,369.8 406.9,369.7 407.8,370.1 408.7,369.8 409.6,370.3 410.5,370.4 411.4,369.6 412.3,369.7 413.2,370.5 414.1,370.7 415.0,369.7 415.9,369.8 416.8,369.9 417.7,369.4 418.6,369.8 419.5,370.2 420.4,370.6 421.3,371.3 422.2,371.4 423.1,371.7 424.0,371.8 424.9,370.7 425.8,371.0 426.7,370.9 427.6,370.1 428.5,370.0 429.4,370.8 430.3,370.2 431.2,370.2 432.1,370.6 433.0,371.0 433.9,370.4 434.8,370.7 435.7,370.9 436.6,371.6 437.5,371.2 438.4,371.8 439.3,371.1 440.2,371.4 441.1,371.9 442.0,372.3 442.9,371.8 443.8,371.3 444.7,371.0 445.6,371.3 446.5,370.7 447.4,371.2 448.3,371.0 449.2,370.0 450.1,369.9 451.0,370.4 451.9,370.0 452.8,370.0 453.7,369.5 454.6,369.3 455.5,369.6 456.4,370.3 457.3,369.7 458.2,369.9 459.1,370.0 460.0,370.1 460.9,369.8 461.8,370.1 462.7,368.9 463.6,368.4 464.5,369.2 465.4,368.9 466.3,368.7 467.2,367.7 468.1,368.2 469.0,368.5 469.9,368.0 470.8,368.9 471.7,369.4 472.6,369.5 473.5,369.6 474.4,369.2 475.3,369.0 476.2,368.5 477.1,368.0 478.0,368.3 478.9,367.6 479.8,368.1 480.7,367.1 481.6,368.0 482.5,367.6 483.4,367.7 484.3,367.6 485.2,367.4 486.1,366.9 487.0,366.1 487.9,367.1 488.8,366.7 489.7,367.3 490.6,368.1 491.5,368.3 492.4,368.5 493.3,369.5 494.2,369.1 495.1,368.5 496.0,368.2 496.9,368.7 497.8,368.0 498.7,368.1 499.6,367.4 500.5,366.9 501.4,367.1 502.3,367.2 503.2,366.3 504.1,366.9 505.0,366.9 505.9,366.7 506.8,366.6 507.7,365.5 508.6,366.1 509.5,366.3 510.4,365.2 511.3,365.4 512.2,365.2 513.1,365.4 514.0,365.0 514.9,364.8 515.8,364.8 516.7,363.6 517.6,363.3 518.5,363.1 519.4,362.8 520.3,362.5 521.2,363.2 522.1,363.0 523.0,362.3 523.9,363.0 524.8,363.0 525.7,363.2 526.6,363.4 527.5,364.0 528.4,364.1 529.3,363.8 530.2,363.5 531.1,363.6 532.0,363.3 532.9,363.8 533.8,363.9 534.7,363.4 535.6,362.8 536.5,362.8 537.4,362.9 538.3,363.0 539.2,363.4 540.1,363.2 541.0,364.1 541.9,364.3 542.8,364.5 543.7,364.8 544.6,364.5 545.5,364.2 546.4,363.3 547.3,363.0 548.2,363.1 549.1,363.1 550.0,363.7 550.9,364.2 551.8,363.8 552.7,364.4 553.6,364.6 554.5,365.2 555.4,365.4 556.3,364.9 557.2,365.6 558.1,365.6 559.0,365.1 559.9,365.6 560.8,365.5 561.7,366.7 562.6,366.8 563.5,367.4 564.4,367.7 565.3,367.9 566.2,368.3 567.1,368.3 568.0,367.5 568.9,367.8 569.8,366.8 570.7,366.7 571.6,367.2 572.5,366.1 573.4,365.9 574.3,365.6 575.2,366.2 576.1,365.4 577.0,365.4 577.9,366.5 578.8,365.7 579.7,366.7 580.6,366.7 581.5,367.0 582.4,368.0 583.3,368.3 584.2,369.4 585.1,369.2 586.0,370.3 586.9,370.2 587.8,370.6 588.7,370.1 589.6,371.1 590.5,371.6 591.4,370.7 592.3,371.3 593.2,371.8 594.1,372.4 595.0,371.9 595.9,372.1 596.8,372.4 597.7,372.6 598.6,372.6 599.5,371.9 600.4,371.6 601.3,371.4 602.2,371.1 603.1,371.0 604.0,370.3 604.9,370.6 605.8,370.9 606.7,370.0 607.6,370.2 608.5,369.3 609.4,369.7 610.3,369.5 611.2,369.2 612.1,368.8 613.0,368.5 613.9,369.0 614.8,369.8 615.7,369.3 616.6,369.6 617.5,370.8 618.4,371.1 619.3,370.7 620.2,370.7 621.1,371.1 622.0,370.5 622.9,370.7" fill="none" stroke="#7ccb72" stroke-width="1" stroke-linejoin="round"/></svg><div class="t" style="left:281.5px;top:358px;font-size:10px;color:#c6c6d2;font-weight:400;">70</div><div class="t" style="left:281.5px;top:371px;font-size:10px;color:#c6c6d2;font-weight:400;">60</div><div class="t" style="left:302.2px;top:383.6px;font-size:10.4px;color:#c6c6d2;font-weight:400;letter-spacing:0.12px;">05:00</div><div class="t" style="left:356.7px;top:383.6px;font-size:10.4px;color:#c6c6d2;font-weight:400;letter-spacing:0.12px;">06:00</div><div class="t" style="left:411.2px;top:383.6px;font-size:10.4px;color:#c6c6d2;font-weight:400;letter-spacing:0.12px;">07:00</div><div class="t" style="left:465.2px;top:383.6px;font-size:10.4px;color:#c6c6d2;font-weight:400;letter-spacing:0.12px;">08:00</div><div class="t" style="left:519.7px;top:383.6px;font-size:10.4px;color:#c6c6d2;font-weight:400;letter-spacing:0.12px;">09:00</div><div class="t" style="left:573.7px;top:383.6px;font-size:10.4px;color:#c6c6d2;font-weight:400;letter-spacing:0.12px;">10:00</div><div style="position:absolute;left:281.5px;top:407.5px;width:11px;height:3px;border-radius:1.5px;background:#73BF69"></div><div class="t" style="left:299.0px;top:403.0px;font-size:10.2px;color:#c6c6d2;font-weight:400;letter-spacing:0.05px;">A-series</div><svg style="position:absolute;left:0;top:0" width="1024" height="577"><line x1="670" y1="371.5" x2="999" y2="371.5" stroke="#2a2c31" stroke-width="1"/><line x1="688.5" y1="360" x2="688.5" y2="384" stroke="#2a2c31" stroke-width="1"/><line x1="742.5" y1="360" x2="742.5" y2="384" stroke="#2a2c31" stroke-width="1"/><line x1="798.5" y1="360" x2="798.5" y2="384" stroke="#2a2c31" stroke-width="1"/><line x1="852.5" y1="360" x2="852.5" y2="384" stroke="#2a2c31" stroke-width="1"/><line x1="907.5" y1="360" x2="907.5" y2="384" stroke="#2a2c31" stroke-width="1"/><line x1="962" y1="360" x2="962" y2="384" stroke="#2a2c31" stroke-width="1"/><polyline points="670.0,375.0 670.9,374.7 671.8,374.8 672.7,374.3 673.6,374.0 674.5,374.3 675.4,375.2 676.3,375.3 677.2,375.5 678.1,375.1 679.0,375.4 679.9,374.4 680.8,373.7 681.7,372.9 682.6,372.8 683.5,373.8 684.4,373.8 685.3,373.9 686.2,373.6 687.1,372.4 688.0,372.1 688.9,372.1 689.8,372.0 690.7,371.9 691.6,371.7 692.5,370.6 693.4,371.1 694.3,371.4 695.2,371.4 696.1,371.2 697.0,371.8 697.9,371.3 698.8,372.0 699.7,371.6 700.6,370.9 701.5,370.3 702.4,371.3 703.3,371.2 704.2,371.9 705.1,372.3 706.0,372.2 706.9,371.6 707.8,371.3 708.7,370.5 709.6,369.9 710.5,370.5 711.4,371.5 712.3,371.0 713.2,371.5 714.1,372.6 715.0,372.3 715.9,372.3 716.8,371.9 717.7,371.4 718.6,371.9 719.5,370.6 720.4,370.8 721.3,370.6 722.2,371.1 723.1,370.7 724.0,370.8 724.9,371.3 725.8,370.4 726.7,370.3 727.6,370.3 728.5,369.0 729.4,368.6 730.3,368.4 731.2,369.1 732.1,369.6 733.0,369.7 733.9,370.5 734.8,369.8 735.7,369.1 736.6,367.6 737.5,368.0 738.4,368.1 739.3,368.0 740.2,367.6 741.1,367.7 742.0,366.4 742.9,366.6 743.8,367.4 744.7,367.7 745.6,367.8 746.5,369.0 747.4,368.9 748.3,368.9 749.2,368.1 750.1,367.8 751.0,367.9 751.9,367.4 752.8,367.5 753.7,368.0 754.6,367.0 755.5,366.5 756.4,366.3 757.3,366.3 758.2,367.2 759.1,366.9 760.0,367.0 760.9,367.0 761.8,368.2 762.7,367.7 763.6,367.6 764.5,367.7 765.4,367.8 766.3,368.2 767.2,369.0 768.1,368.9 769.0,369.6 769.9,371.0 770.8,371.5 771.7,373.2 772.6,371.8 773.5,371.7 774.4,371.4 775.3,370.5 776.2,370.6 777.1,369.4 778.0,368.6 778.9,368.5 779.8,368.3 780.7,369.0 781.6,369.0 782.5,370.1 783.4,370.3 784.3,370.1 785.2,369.7 786.1,370.1 787.0,370.2 787.9,370.2 788.8,370.4 789.7,371.2 790.6,370.5 791.5,370.0 792.4,370.7 793.3,369.9 794.2,370.0 795.1,369.0 796.0,369.2 796.9,368.6 797.8,368.6 798.7,368.4 799.6,368.0 800.5,367.3 801.4,367.3 802.3,368.5 803.2,369.2 804.1,369.9 805.0,369.9 805.9,369.8 806.8,369.4 807.7,368.6 808.6,368.1 809.5,367.2 810.4,366.7 811.3,366.1 812.2,365.0 813.1,365.4 814.0,365.0 814.9,363.6 815.8,364.2 816.7,363.8 817.6,363.0 818.5,361.9 819.4,362.8 820.3,361.9 821.2,363.0 822.1,362.6 823.0,361.9 823.9,362.1 824.8,363.0 825.7,363.2 826.6,363.8 827.5,364.3 828.4,363.8 829.3,363.9 830.2,365.3 831.1,364.5 832.0,365.7 832.9,365.0 833.8,366.1 834.7,366.3 835.6,366.6 836.5,366.0 837.4,366.0 838.3,364.9 839.2,365.1 840.1,364.3 841.0,365.2 841.9,365.2 842.8,365.1 843.7,365.4 844.6,365.0 845.5,365.2 846.4,366.3 847.3,366.5 848.2,367.4 849.1,367.5 850.0,367.3 850.9,368.0 851.8,368.9 852.7,369.1 853.6,368.9 854.5,370.4 855.4,370.8 856.3,369.5 857.2,369.6 858.1,368.9 859.0,368.9 859.9,367.8 860.8,367.3 861.7,367.6 862.6,368.2 863.5,367.1 864.4,367.1 865.3,367.9 866.2,368.7 867.1,368.7 868.0,369.0 868.9,370.0 869.8,369.8 870.7,368.7 871.6,369.4 872.5,368.3 873.4,368.2 874.3,368.5 875.2,367.8 876.1,368.0 877.0,367.9 877.9,369.5 878.8,369.3 879.7,369.9 880.6,371.0 881.5,370.9 882.4,370.5 883.3,370.3 884.2,369.4 885.1,367.9 886.0,367.6 886.9,368.0 887.8,368.3 888.7,369.1 889.6,369.3 890.5,369.2 891.4,369.9 892.3,370.2 893.2,369.1 894.1,369.1 895.0,368.9 895.9,368.1 896.8,367.8 897.7,367.6 898.6,367.1 899.5,367.7 900.4,367.1 901.3,367.5 902.2,366.6 903.1,367.2 904.0,366.7 904.9,366.0 905.8,365.2 906.7,364.4 907.6,364.6 908.5,363.6 909.4,363.5 910.3,362.8 911.2,362.6 912.1,362.6 913.0,363.3 913.9,362.4 914.8,363.2 915.7,362.5 916.6,362.6 917.5,362.3 918.4,362.6 919.3,362.0 920.2,362.3 921.1,362.9 922.0,362.0 922.9,362.5 923.8,362.1 924.7,362.1 925.6,361.7 926.5,362.0 927.4,363.4 928.3,363.6 929.2,363.9 930.1,364.2 931.0,364.5 931.9,363.2 932.8,363.5 933.7,363.1 934.6,362.9 935.5,363.1 936.4,363.1 937.3,363.8 938.2,363.2 939.1,364.3 940.0,364.7 940.9,365.3 941.8,365.5 942.7,365.9 943.6,365.4 944.5,366.2 945.4,365.7 946.3,366.0 947.2,366.5 948.1,366.3 949.0,365.9 949.9,366.0 950.8,366.2 951.7,366.6 952.6,367.2 953.5,367.1 954.4,366.4 955.3,366.4 956.2,366.8 957.1,366.1 958.0,366.3 958.9,365.7 959.8,365.9 960.7,366.3 961.6,366.5 962.5,366.7 963.4,366.8 964.3,367.9 965.2,367.9 966.1,367.7 967.0,367.9 967.9,369.4 968.8,369.8 969.7,370.1 970.6,369.9 971.5,369.7 972.4,369.6 973.3,370.0 974.2,370.1 975.1,371.1 976.0,371.2 976.9,371.2 977.8,370.1 978.7,369.8 979.6,369.5 980.5,369.9 981.4,368.9 982.3,370.3 983.2,370.8 984.1,371.2 985.0,372.4 985.9,372.1 986.8,372.5 987.7,371.7 988.6,371.2 989.5,370.8 990.4,370.7 991.3,370.1 992.2,369.7 993.1,370.4 994.0,369.2 994.9,369.6 995.8,369.0 996.7,368.6 997.6,368.1" fill="none" stroke="#7ccb72" stroke-width="1" stroke-linejoin="round"/></svg><div class="t" style="left:655.5px;top:366.5px;font-size:10px;color:#c6c6d2;font-weight:400;">10</div><div class="t" style="left:674.7px;top:383.6px;font-size:10.4px;color:#c6c6d2;font-weight:400;letter-spacing:0.12px;">05:00</div><div class="t" style="left:728.7px;top:383.6px;font-size:10.4px;color:#c6c6d2;font-weight:400;letter-spacing:0.12px;">06:00</div><div class="t" style="left:784.7px;top:383.6px;font-size:10.4px;color:#c6c6d2;font-weight:400;letter-spacing:0.12px;">07:00</div><div class="t" style="left:838.7px;top:383.6px;font-size:10.4px;color:#c6c6d2;font-weight:400;letter-spacing:0.12px;">08:00</div><div class="t" style="left:893.7px;top:383.6px;font-size:10.4px;color:#c6c6d2;font-weight:400;letter-spacing:0.12px;">09:00</div><div class="t" style="left:948.2px;top:383.6px;font-size:10.4px;color:#c6c6d2;font-weight:400;letter-spacing:0.12px;">10:00</div><div style="position:absolute;left:655.5px;top:407.5px;width:11px;height:3px;border-radius:1.5px;background:#73BF69"></div><div class="t" style="left:673.0px;top:403.0px;font-size:10.2px;color:#c6c6d2;font-weight:400;letter-spacing:0.05px;">A-series</div>
</body></html>
